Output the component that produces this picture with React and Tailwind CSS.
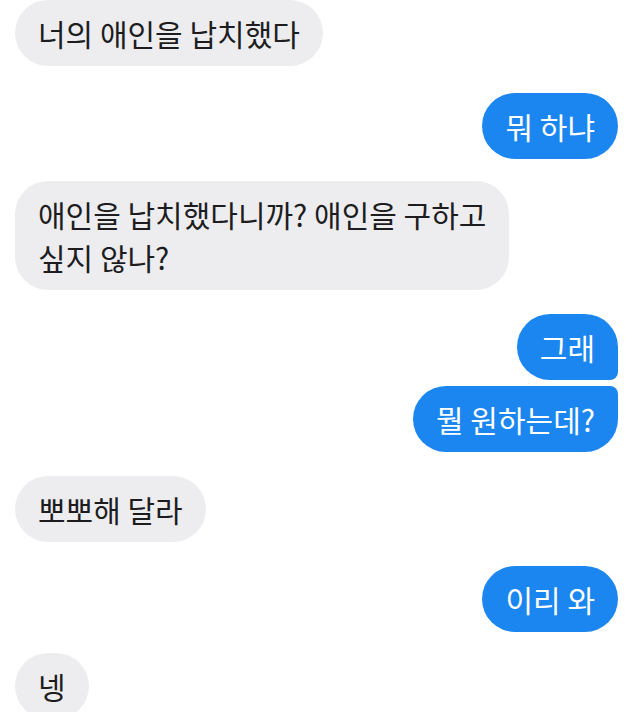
const messages = [
  { id: 1, from: "them", text: ["너의 애인을 납치했다"], gap: "mt-0" },
  { id: 2, from: "me", text: ["뭐 하냐"], gap: "mt-[27px]" },
  { id: 3, from: "them", text: ["애인을 납치했다니까? 애인을 구하고", "싶지 않나?"], gap: "mt-[22px]" },
  { id: 4, from: "me", text: ["그래"], gap: "mt-[24px]", tail: "bottom" },
  { id: 5, from: "me", text: ["뭘 원하는데?"], gap: "mt-[6px]", tail: "top" },
  { id: 6, from: "them", text: ["뽀뽀해 달라"], gap: "mt-[24px]" },
  { id: 7, from: "me", text: ["이리 와"], gap: "mt-[24px]" },
  { id: 8, from: "them", text: ["넹"], gap: "mt-[21px]" },
];

const Bubble = ({ msg }) => {
  const mine = msg.from === "me";
  const corners =
    msg.tail === "bottom"
      ? "rounded-[33px] rounded-br-[8px]"
      : msg.tail === "top"
      ? "rounded-[33px] rounded-tr-[8px]"
      : "rounded-[33px]";

  return (
    <div className={`flex ${mine ? "justify-end" : "justify-start"} ${msg.gap}`}>
      <div
        className={`${corners} px-[23px] py-[11.5px] text-[30px] leading-[43px] whitespace-nowrap ${
          mine ? "bg-[#1b86f0] text-white" : "bg-[#ededf0] text-[#1d1d1f]"
        }`}
      >
        {msg.text.map((line, i) => (
          <div key={i}>{line}</div>
        ))}
      </div>
    </div>
  );
};

export default function App() {
  return (
    <div
      className="h-[712px] w-full overflow-hidden bg-white pl-[15px] pr-[21px]"
      style={{ fontFamily: '"Noto Sans CJK KR", "Noto Sans", sans-serif' }}
    >
      {messages.map((msg) => (
        <Bubble key={msg.id} msg={msg} />
      ))}
    </div>
  );
}
